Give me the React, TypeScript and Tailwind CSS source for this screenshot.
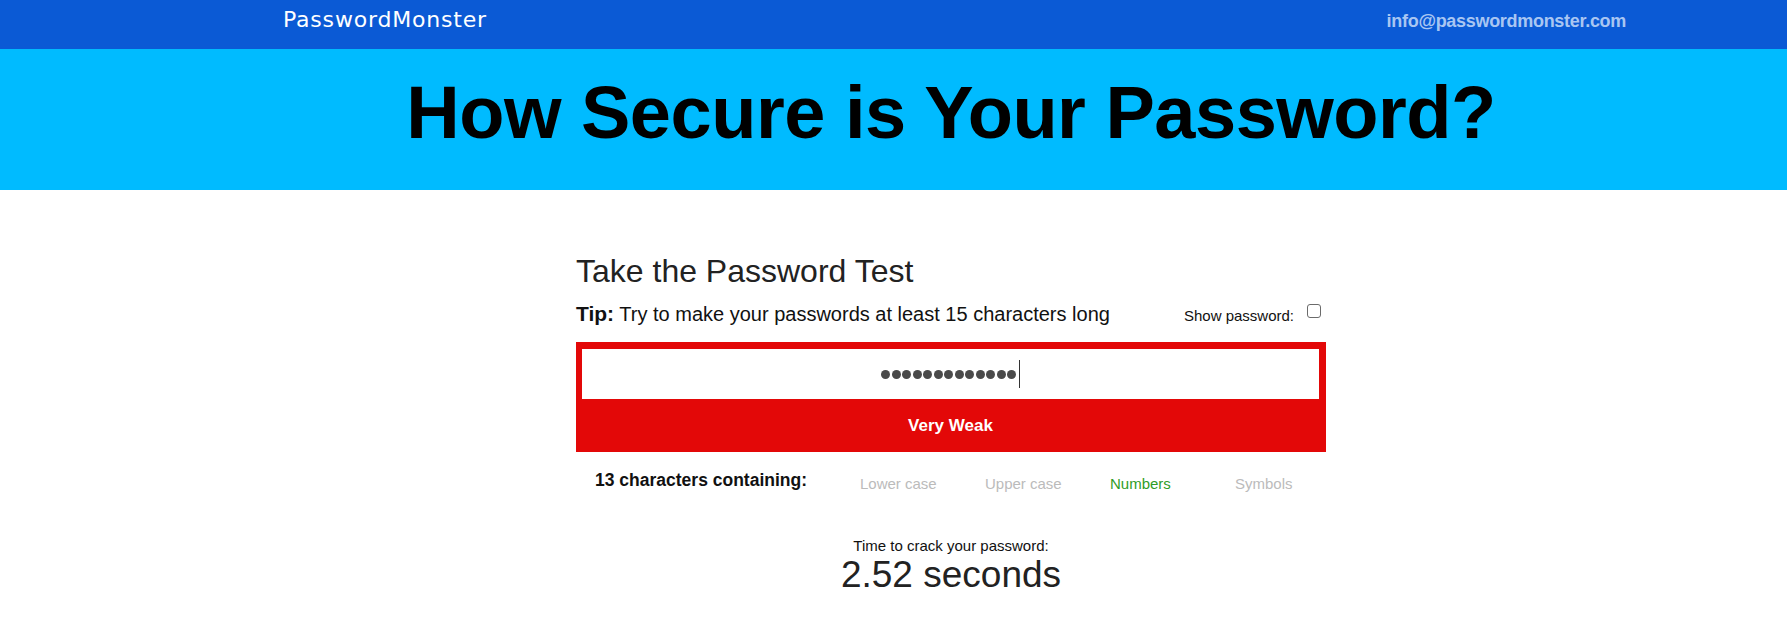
import React from "react";

const arial = { fontFamily: '"Liberation Sans", Arial, sans-serif' };

export default function App() {
  const dots = Array.from({ length: 13 });
  return (
    <div className="w-[1787px] h-[633px] bg-white overflow-hidden font-['Liberation_Sans',Arial,sans-serif]">
      {/* Top bar */}
      <div className="h-[49px] bg-[#0b5ad5] flex items-start justify-between pl-[283px] pr-[161px]">
        <div className="mt-[7px] leading-[26px] text-[22px] tracking-[0.8px] text-white font-['DejaVu_Sans',sans-serif]">
          PasswordMonster
        </div>
        <div className="mt-[8px] leading-[26px] text-[18px] font-bold tracking-[-0.3px] text-[#a9c6f2]">
          info@passwordmonster.com
        </div>
      </div>

      {/* Banner */}
      <div className="h-[141px] bg-[#00bbff] pl-[115px] pt-[27px]">
        <h1 className="text-center text-[74px] leading-[74px] font-bold tracking-[-0.5px] text-black">
          How Secure is Your Password?
        </h1>
      </div>

      {/* Main */}
      <div className="flex justify-center pl-[115px]">
        <div className="w-[750px] pt-[62px]" style={arial}>
          <h2 className="text-[32px] leading-[38px] text-[#222]">Take the Password Test</h2>

          <div className="mt-[12px] flex items-start justify-between">
            <div className="leading-[24px] text-[#111]">
              <span className="text-[21px] font-bold">Tip:</span>
              <span className="text-[20px]"> Try to make your passwords at least 15 characters long</span>
            </div>
            <div className="flex items-start pr-[5px]">
              <span className="text-[15px] leading-[18px] mt-[5px] text-[#111]">Show password:</span>
              <span className="ml-[13px] mt-[2px] w-[14px] h-[14px] rounded-[3px] border border-[#6b6b6b] bg-white" />
            </div>
          </div>

          {/* Password box */}
          <div className="mt-[14px] bg-[#e30808] pt-[7px] pl-[6px] pr-[7px]">
            <div className="h-[50px] bg-white flex items-center justify-center">
              <div className="flex items-center gap-[1.5px]">
                {dots.map((_, i) => (
                  <span key={i} className="w-[9px] h-[9px] rounded-full bg-[#4a4a4a]" />
                ))}
                <span className="ml-[1px] w-[1.5px] h-[28px] bg-[#333]" />
              </div>
            </div>
            <div className="h-[53px] flex items-center justify-center text-white font-bold text-[17px]">
              Very Weak
            </div>
          </div>

          {/* Characters row */}
          <div className="mt-[18px] flex items-start pl-[19px]">
            <div className="w-[265px] text-[17.5px] leading-[20px] font-bold text-[#111]">
              13 characters containing:
            </div>
            <div className="w-[125px] mt-[4px] text-[15px] leading-[20px] text-[#bbbbbb]">Lower case</div>
            <div className="w-[125px] mt-[4px] text-[15px] leading-[20px] text-[#bbbbbb]">Upper case</div>
            <div className="w-[125px] mt-[4px] text-[15px] leading-[20px] text-[#2f9d27]">Numbers</div>
            <div className="mt-[4px] text-[15px] leading-[20px] text-[#bbbbbb] whitespace-nowrap">Symbols</div>
          </div>

          {/* Time to crack */}
          <div className="mt-[44px] text-center text-[15px] leading-[16px] text-[#111]">
            Time to crack your password:
          </div>
          <div className="text-center text-[37px] leading-[42px] text-[#222]">2.52 seconds</div>
        </div>
      </div>
    </div>
  );
}
